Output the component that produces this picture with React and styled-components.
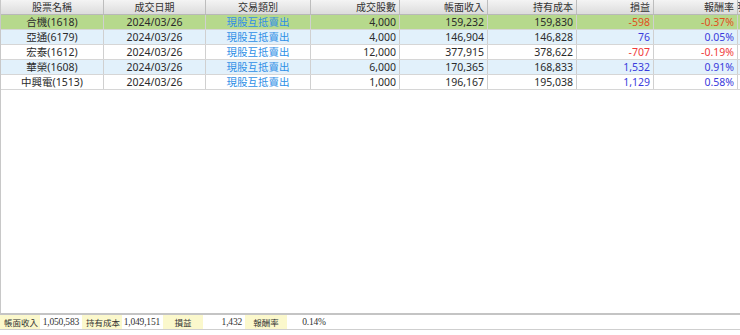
import React from "react"
import styled, { createGlobalStyle } from "styled-components"

const GlobalStyle = createGlobalStyle`
  html, body {
    margin: 0;
    padding: 0;
    background: #ffffff;
  }
  body {
    font-family: "Noto Sans", "Noto Sans CJK TC", sans-serif;
    font-size: 10.5px;
    color: #222;
  }
`

const COLS = "103px 102px 105px 89px 88px 89px 77px 84px 1fr"

const Page = styled.div`
  width: 740px;
  height: 335px;
  display: flex;
  flex-direction: column;
  overflow: hidden;
`

const Grid = styled.div`
  flex: 1;
  display: flex;
  flex-direction: column;
  border-left: 1px solid #c8c8c8;
  border-bottom: 2px solid #c4c4c4;
`

const HeaderRow = styled.div`
  display: grid;
  grid-template-columns: ${COLS};
  height: 14px;
  background: linear-gradient(#f4f4f4, #dcdcdc);
  border-bottom: 1px solid #b8b8b8;
`

const HeaderCell = styled.div`
  display: flex;
  align-items: center;
  justify-content: ${(p) => (p.$align === "right" ? "flex-end" : "center")};
  padding: 0 3px;
  border-right: 1px solid #bdbdbd;
  color: #333;
  font-size: 10px;
  line-height: 13px;
  overflow: hidden;
  white-space: nowrap;
`

const Row = styled.div`
  display: grid;
  grid-template-columns: ${COLS};
  height: 14px;
  border-bottom: 1px solid #d6d6d6;
  background: ${(p) => p.$bg};
`

const Cell = styled.div`
  display: flex;
  align-items: center;
  justify-content: ${(p) =>
    p.$align === "right" ? "flex-end" : p.$align === "left" ? "flex-start" : "center"};
  padding: 0 3px;
  border-right: 1px solid #d0d0d0;
  color: ${(p) => p.$color || "#2b2b2b"};
  line-height: 13px;
  white-space: nowrap;
  overflow: hidden;
`

const Summary = styled.div`
  display: flex;
  height: 14px;
  border-bottom: 1px solid #cfcfcf;
  margin-bottom: 5px;
  white-space: nowrap;
`

const SumLabel = styled.div`
  width: ${(p) => p.$w}px;
  flex: none;
  background: #fbf8cc;
  display: flex;
  align-items: center;
  justify-content: ${(p) => (p.$center ? "center" : "flex-start")};
  padding-left: ${(p) => (p.$center ? 0 : 4)}px;
  box-sizing: border-box;
  font-family: "Noto Sans CJK TC", sans-serif;
  font-size: 8.5px;
  color: #333;
`

const SumValue = styled.div`
  width: ${(p) => p.$w}px;
  flex: none;
  display: flex;
  align-items: center;
  justify-content: ${(p) => (p.$center ? "center" : "flex-end")};
  padding-right: ${(p) => (p.$center ? 0 : 3)}px;
  box-sizing: border-box;
  font-family: "Liberation Serif", "DejaVu Serif", serif;
  font-size: 9.5px;
  letter-spacing: -0.2px;
  color: #333;
`

const headers = [
  { t: "股票名稱" },
  { t: "成交日期" },
  { t: "交易類別" },
  { t: "成交股數", align: "right" },
  { t: "帳面收入", align: "right" },
  { t: "持有成本", align: "right" },
  { t: "損益", align: "right" },
  { t: "報酬率", align: "right" },
  { t: "明", align: "left" },
]

const RED = "#f03a3a"
const BLUE = "#3b3bdc"

const rows = [
  ["合機(1618)", "4,000", "159,232", "159,830", "-598", "-0.37%"],
  ["亞通(6179)", "4,000", "146,904", "146,828", "76", "0.05%"],
  ["宏泰(1612)", "12,000", "377,915", "378,622", "-707", "-0.19%"],
  ["華榮(1608)", "6,000", "170,365", "168,833", "1,532", "0.91%"],
  ["中興電(1513)", "1,000", "196,167", "195,038", "1,129", "0.58%"],
]

const rowBg = (i) => (i === 0 ? "#b6d98c" : i % 2 === 1 ? "#e2f1fb" : "#ffffff")

const App = () => (
  <Page>
    <GlobalStyle />
    <Grid>
      <HeaderRow>
        {headers.map((h) => (
          <HeaderCell key={h.t} $align={h.align}>
            {h.t}
          </HeaderCell>
        ))}
      </HeaderRow>
      {rows.map((r, i) => {
        const neg = r[4].startsWith("-")
        const pl = neg ? (i === 0 ? "#e0501e" : RED) : BLUE
        return (
          <Row key={r[0]} $bg={rowBg(i)}>
            <Cell>{r[0]}</Cell>
            <Cell>2024/03/26</Cell>
            <Cell $color="#2f8fe6">現股互抵賣出</Cell>
            <Cell $align="right">{r[1]}</Cell>
            <Cell $align="right">{r[2]}</Cell>
            <Cell $align="right">{r[3]}</Cell>
            <Cell $align="right" $color={pl}>{r[4]}</Cell>
            <Cell $align="right" $color={pl}>{r[5]}</Cell>
            <Cell $align="left">明</Cell>
          </Row>
        )
      })}
    </Grid>
    <Summary>
      <SumLabel $w={40}>帳面收入</SumLabel>
      <SumValue $w={42}>1,050,583</SumValue>
      <SumLabel $w={40}>持有成本</SumLabel>
      <SumValue $w={41}>1,049,151</SumValue>
      <SumLabel $w={40} $center>損益</SumLabel>
      <SumValue $w={42}>1,432</SumValue>
      <SumLabel $w={42} $center>報酬率</SumLabel>
      <SumValue $w={54} $center>0.14%</SumValue>
    </Summary>
  </Page>
)

export default App
